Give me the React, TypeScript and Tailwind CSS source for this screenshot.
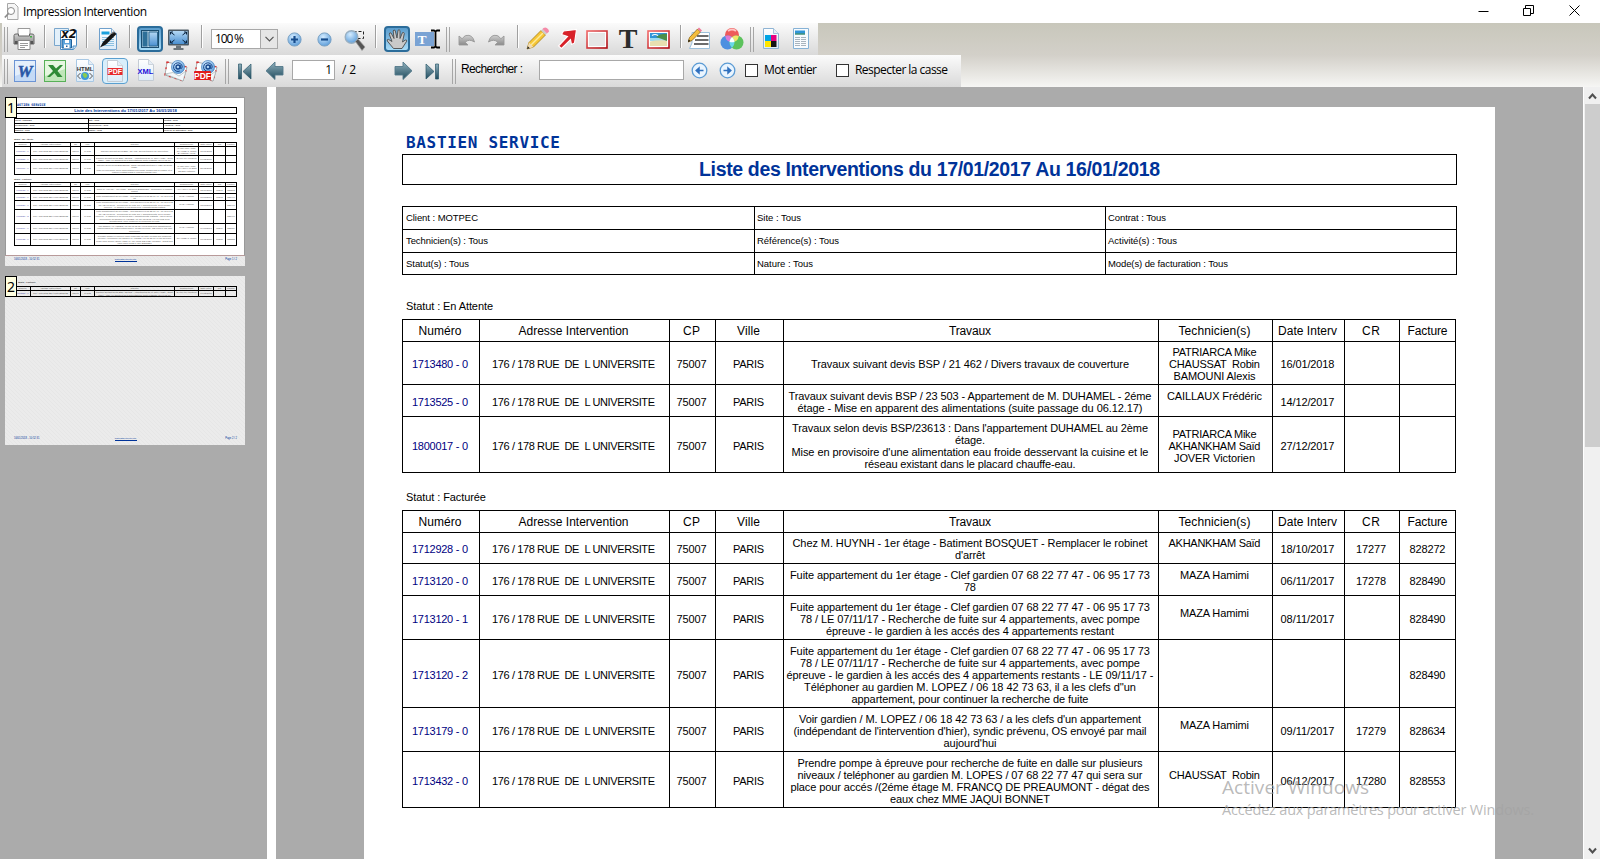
import React, { useLayoutEffect, useRef } from "react";

/* Text whose tracking is set so that it fills a given width. */
function Fit({ w, className = "", children }: { w: number; className?: string; children: string }) {
  const ref = useRef<HTMLSpanElement>(null);
  useLayoutEffect(() => {
    const el = ref.current;
    if (!el) return;
    el.style.letterSpacing = "0px";
    const natural = el.getBoundingClientRect().width;
    const gap = (w - natural) / Math.max(1, children.length - 1);
    el.style.letterSpacing = `${gap}px`;
    el.style.marginRight = `${-gap}px`;
  }, [w, children]);
  return (
    <span ref={ref} className={`inline-block whitespace-pre ${className}`}>
      {children}
    </span>
  );
}

type Line = [string, number];
type Row = { h: number; mini: number; num: string; works: Line[]; tech: Line[]; date: string; cr: string; bill: string };

const A: Line = ["Fuite appartement du 1er étage - Clef gardien 07 68 22 77 47 - 06 95 17 73", 360];
const B: Line = ["78 / LE 07/11/17 - Recherche de fuite sur 4 appartements, avec pompe", 340];
const BLANK: Line = ["", 0];
const MAZA: Line[] = [["MAZA Hamimi", 69], BLANK];

const waiting: Row[] = [
  { h: 43, mini: 9, num: "1713480 - 0", works: [["Travaux suivant devis BSP / 21 462 / Divers travaux de couverture", 318]], tech: [["PATRIARCA Mike", 84], ["CHAUSSAT  Robin", 91], ["BAMOUNI Alexis", 82]], date: "16/01/2018", cr: "", bill: "" },
  { h: 32, mini: 7, num: "1713525 - 0", works: [["Travaux suivant devis BSP / 23 503 - Appartement de M. DUHAMEL - 2éme", 363], ["étage - Mise en apparent des alimentations (suite passage du 06.12.17)", 345]], tech: [["CAILLAUX Frédéric", 95], BLANK], date: "14/12/2017", cr: "", bill: "" },
  { h: 56, mini: 12, num: "1800017 - 0", works: [["Travaux selon devis BSP/23613 : Dans l'appartement DUHAMEL au 2ème", 356], ["étage.", 30], ["Mise en provisoire d'une alimentation eau froide desservant la cuisine et le", 357], ["réseau existant dans le placard chauffe-eau.", 211]], tech: [["PATRIARCA Mike", 84], ["AKHANKHAM Saïd", 92], ["JOVER Victorien", 81]], date: "27/12/2017", cr: "", bill: "" },
];

const billed: Row[] = [
  { h: 31, mini: 7, num: "1712928 - 0", works: [["Chez M. HUYNH - 1er étage - Batiment BOSQUET - Remplacer le robinet", 355], ["d'arrêt", 30]], tech: [["AKHANKHAM Saïd", 92], BLANK], date: "18/10/2017", cr: "17277", bill: "828272" },
  { h: 32, mini: 7, num: "1713120 - 0", works: [A, ["78", 12]], tech: MAZA, date: "06/11/2017", cr: "17278", bill: "828490" },
  { h: 44, mini: 9, num: "1713120 - 1", works: [A, B, ["épreuve - le gardien à les accés des 4 appartements restant", 288]], tech: MAZA, date: "08/11/2017", cr: "", bill: "828490" },
  { h: 68, mini: 14, num: "1713120 - 2", works: [A, B, ["épreuve - le gardien à les accés des 4 appartements restants - LE 09/11/17 -", 367], ["Téléphoner au gardien M. LOPEZ / 06 18 42 73 63, il a les clefs d''un", 332], ["appartement, pour continuer la recherche de fuite", 237]], tech: [], date: "", cr: "", bill: "828490" },
  { h: 44, mini: 10, num: "1713179 - 0", works: [["Voir gardien / M. LOPEZ / 06 18 42 73 63 / a les clefs d'un appartement", 342], ["(indépendant de l'intervention d'hier), syndic prévenu, OS envoyé par mail", 353], ["aujourd'hui", 53]], tech: MAZA, date: "09/11/2017", cr: "17279", bill: "828634" },
  { h: 56, mini: 12, num: "1713432 - 0", works: [["Prendre pompe à épreuve pour recherche de fuite en dalle sur plusieurs", 345], ["niveaux / teléphoner au gardien M. LOPES / 07 68 22 77 47 qui sera sur", 345], ["place pour accés /(2éme étage M. FRANCQ DE PREAUMONT - dégat des", 359], ["eaux chez MME JAQUI BONNET", 160]], tech: [["CHAUSSAT  Robin", 91], BLANK], date: "06/12/2017", cr: "17280", bill: "828553" },
];

const heads: Line[] = [["Numéro", 43], ["Adresse Intervention", 110], ["CP", 17], ["Ville", 23], ["Travaux", 42], ["Technicien(s)", 72], ["Date Interv", 59], ["CR", 18], ["Facture", 40]];
const COLS = "grid grid-cols-[77px_190px_46px_68px_375px_114px_72px_55px_57px]";
const MINI = "grid grid-cols-[16px_40px_10px_14px_80px_24px_15px_12px_12px]";

function Cell({ lines, blue = false }: { lines: Line[]; blue?: boolean }) {
  return (
    <div className={`flex flex-col items-center justify-center border-l border-black pr-[2px] text-[11px] leading-[12px] last:border-r last:pr-0 ${blue ? "text-[#00007f]" : "text-black"}`}>
      {lines.map(([t, w], i) => (t ? <Fit key={i} w={w}>{t}</Fit> : <div key={i} className="h-[12px]" />))}
    </div>
  );
}

function Table({ rows }: { rows: Row[] }) {
  return (
    <div className="w-[1054px] border-b border-black">
      <div className={`${COLS} h-[22px] border-t border-black`}>
        {heads.map(([t, w]) => (
          <div key={t} className="flex items-center justify-center border-l border-black pt-px pr-[2px] text-[12px] leading-[14px] last:border-r last:pr-0">
            <Fit w={w}>{t}</Fit>
          </div>
        ))}
      </div>
      {rows.map((r) => (
        <div key={r.num} className={`${COLS} border-t border-black ${r.h % 2 ? "pt-[2px]" : "pt-[3px]"} *:relative *:before:absolute *:before:-top-[3px] *:before:-left-px *:before:h-[3px] *:before:w-px *:before:bg-black last:*:last:after:bg-black *:last:after:absolute *:last:after:-top-[3px] *:last:after:-right-px *:last:after:h-[3px] *:last:after:w-px *:last:after:bg-black`} style={{ height: r.h }}>
          <Cell blue lines={[[r.num, 56]]} />
          <Cell lines={[["176 / 178 RUE  DE  L UNIVERSITE", 163]]} />
          <Cell lines={[["75007", 30]]} />
          <Cell lines={[["PARIS", 31]]} />
          <Cell lines={r.works} />
          <Cell lines={r.tech} />
          <Cell lines={r.date ? [[r.date, 54]] : []} />
          <Cell lines={r.cr ? [[r.cr, 30]] : []} />
          <Cell lines={r.bill ? [[r.bill, 36]] : []} />
        </div>
      ))}
    </div>
  );
}

const info: Line[][] = [
  [["Client : MOTPEC", 72], ["Site : Tous", 44], ["Contrat : Tous", 58]],
  [["Technicien(s) : Tous", 82], ["Référence(s) : Tous", 82], ["Activité(s) : Tous", 69]],
  [["Statut(s) : Tous", 63], ["Nature : Tous", 56], ["Mode(s) de facturation : Tous", 120]],
];

function Report() {
  return (
    <div className="h-[752px] w-[1131px] shrink-0 bg-white pl-[38px] text-black">
      <div className="h-[47px] pt-[25px] pl-[4px] text-[16px] leading-[22px] font-bold text-[#003399] [font-family:'Comic_Sans_MS','DejaVu_Sans_Mono',monospace]">
        <Fit w={154}>BASTIEN SERVICE</Fit>
      </div>
      <div className="flex h-[31px] w-[1055px] items-center justify-center border border-black pb-[2px] text-[19.5px] leading-[22px] font-bold text-[#003399]">
        <Fit w={461}>Liste des Interventions du 17/01/2017 Au 16/01/2018</Fit>
      </div>
      <div className="mt-[21px] w-[1055px] border-b border-black">
        {info.map((row, i) => (
          <div key={i} className={`grid grid-cols-[352px_351px_352px] border-t border-black ${i === 2 ? "h-[22px]" : "h-[23px]"}`}>
            {row.map(([t, w]) => (
              <div key={t} className="flex items-center border-l border-black pl-[2px] text-[9.5px] leading-[12px] first:pl-[3px] last:border-r">
                <Fit w={w}>{t}</Fit>
              </div>
            ))}
          </div>
        ))}
      </div>
      <div className="h-[44px] pt-[25px] pl-[4px] text-[11px] leading-[13px]">
        <Fit w={87}>Statut : En Attente</Fit>
      </div>
      <Table rows={waiting} />
      <div className="h-[37px] pt-[18px] pl-[4px] text-[11px] leading-[13px]">
        <Fit w={80}>Statut : Facturée</Fit>
      </div>
      <Table rows={billed} />
    </div>
  );
}

function MiniCell({ lines, blue = false }: { lines: string[]; blue?: boolean }) {
  return (
    <div className={`flex min-w-0 flex-col items-center justify-center overflow-hidden border-l border-black text-[2.3px] leading-[2.5px] whitespace-pre last:border-r ${blue ? "text-[#5555aa]" : "text-[#555]"}`}>
      {lines.map((t, i) => (t ? <span key={i}>{t}</span> : <div key={i} className="h-[2.5px]" />))}
    </div>
  );
}

function MiniTable({ rows }: { rows: Row[] }) {
  return (
    <div className="w-[223px] border-b border-black">
      <div className={`${MINI} h-[4px] border-t border-black`}>
        {heads.map(([t]) => (
          <MiniCell key={t} lines={[t]} />
        ))}
      </div>
      {rows.map((r) => (
        <div key={r.num} className={`${MINI} border-t border-black`} style={{ height: r.mini }}>
          <MiniCell blue lines={[r.num]} />
          <MiniCell lines={["176 / 178 RUE DE L UNIVERSITE"]} />
          <MiniCell lines={["75007"]} />
          <MiniCell lines={["PARIS"]} />
          <MiniCell lines={r.works.map((l) => l[0])} />
          <MiniCell lines={r.tech.map((l) => l[0])} />
          <MiniCell lines={[r.date]} />
          <MiniCell lines={[r.cr]} />
          <MiniCell lines={[r.bill]} />
        </div>
      ))}
    </div>
  );
}

function MiniFooter({ page }: { page: string }) {
  return (
    <div className="flex h-[10px] justify-between pt-[2px] pr-[8px] pl-[9px] text-[2.6px] leading-[3px] text-[#003399]">
      <span className="w-[27px]">16/01/2018 - 10:52:31</span>
      <span className="h-[4px] w-[22px] border-b border-[#003399] text-center text-[1.9px] whitespace-nowrap">www.bastien-service.com</span>
      <span className="w-[27px] text-right">{page}</span>
    </div>
  );
}

const HATCH = "bg-[#e8e8e8] bg-[repeating-linear-gradient(45deg,#e6e6e6_0px,#e6e6e6_1px,#ebebeb_1px,#ebebeb_2.83px)]";

function Badge({ n }: { n: string }) {
  return (
    <div className="absolute top-0 left-0 flex h-[21px] w-[12px] items-center justify-center border border-black bg-[#ffffe1] text-[14px] leading-none text-black [font-family:'Noto_Sans',sans-serif]">{n}</div>
  );
}

function Thumbs() {
  return (
    <div className="w-[267px] shrink-0 pt-[10px] pl-[5px]">
      <div className="relative h-[169px] w-[240px]">
        <div className="h-[159px] border border-[#999] border-b-[#b89a9a] bg-white pl-[8px]">
          <div className="h-[9px] pt-[5px] pl-[1px] text-[3.4px] leading-[4px] font-bold text-[#003399] [font-family:'DejaVu_Sans_Mono',monospace]">BASTIEN SERVICE</div>
          <div className="flex h-[7px] w-[223px] items-center justify-center border border-black text-[4.2px] leading-[4px] font-bold text-[#003399]">Liste des Interventions du 17/01/2017 Au 16/01/2018</div>
          <div className="mt-[4px] h-[15px] w-[223px] border-b border-black">
            {info.map((row, i) => (
              <div key={i} className={`grid grid-cols-[74px_75px_74px] border-t border-black ${i === 2 ? "h-[4px]" : "h-[5px]"}`}>
                {row.map(([t]) => (
                  <div key={t} className="border-l border-black text-[2.2px] leading-[3px] whitespace-nowrap last:border-r">{t}</div>
                ))}
              </div>
            ))}
          </div>
          <div className="h-[9px] pt-[5px] text-[2.4px] leading-[3px]">Statut : En Attente</div>
          <MiniTable rows={waiting} />
          <div className="h-[7px] pt-[3px] text-[2.4px] leading-[3px]">Statut : Facturée</div>
          <MiniTable rows={billed} />
        </div>
        <div className={HATCH}>
          <MiniFooter page="Page 1 / 2" />
        </div>
        <Badge n="1" />
      </div>
      <div className={`relative mt-[10px] flex h-[169px] w-[240px] flex-col ${HATCH}`}>
        <div className="flex-1 pl-[9px]">
          <div className="h-[10px] pt-[5px] pl-[4px] text-[2.4px] leading-[3px]">Statut : Facturée</div>
          <MiniTable rows={[{ ...waiting[1], mini: 6, num: "1713525 - 1" }]} />
        </div>
        <MiniFooter page="Page 2 / 2" />
        <Badge n="2" />
      </div>
    </div>
  );
}

/* ---------- toolbar ---------- */

function Ico({ w = 24, h = 24, children }: { w?: number; h?: number; children: React.ReactNode }) {
  return (
    <svg width={w} height={h} viewBox={`0 0 ${w} ${h}`} className="block shrink-0">{children}</svg>
  );
}

function Defs() {
  return (
    <svg width="0" height="0" className="absolute">
      <defs>
        <linearGradient id="steel" x1="0" y1="0" x2="0" y2="1"><stop offset="0" stopColor="#8fb0bd" /><stop offset="1" stopColor="#1f4a5c" /></linearGradient>
        <linearGradient id="sky" x1="0" y1="0" x2="0" y2="1"><stop offset="0" stopColor="#b4d8f4" /><stop offset="1" stopColor="#4a8fd0" /></linearGradient>
        <linearGradient id="grey" x1="0" y1="0" x2="0" y2="1"><stop offset="0" stopColor="#d0d0d0" /><stop offset="1" stopColor="#8a8a8a" /></linearGradient>
        <linearGradient id="doc" x1="0" y1="0" x2="0" y2="1"><stop offset="0" stopColor="#ffffff" /><stop offset="1" stopColor="#dcebf8" /></linearGradient>
        <linearGradient id="red" x1="0" y1="0" x2="1" y2="1"><stop offset="0" stopColor="#f26a6a" /><stop offset="1" stopColor="#b00d14" /></linearGradient>
        <radialGradient id="ball" cx="0.4" cy="0.3" r="0.8"><stop offset="0" stopColor="#d4ecff" /><stop offset="1" stopColor="#4f94d6" /></radialGradient>
      </defs>
    </svg>
  );
}

function Slot({ className, children }: { className: string; children?: React.ReactNode }) {
  return <div className={`flex h-full shrink-0 items-center ${className}`}>{children}</div>;
}

function Sep() {
  return <div className="mb-[5px] h-[23px] w-[2px] border-l border-[#a0a0a0] bg-white" />;
}

function Grip() {
  return (
    <div className="flex gap-[2px]">
      <div className="h-[25px] w-px bg-[#a6a6a6]" />
      <div className="h-[25px] w-px bg-[#a6a6a6]" />
    </div>
  );
}

function PageShape({ x = 0, y = 0, w = 18, h = 22, stroke = "#6fa0cc" }: { x?: number; y?: number; w?: number; h?: number; stroke?: string }) {
  return (
    <g>
      <path d={`M${x + 0.5} ${y + 0.5}H${x + w - 5.5}L${x + w - 0.5} ${y + 5.5}V${y + h - 0.5}H${x + 0.5}Z`} fill="url(#doc)" stroke={stroke} />
      <path d={`M${x + w - 5.5} ${y + 0.5}V${y + 5.5}H${x + w - 0.5}`} fill="#e6eef6" stroke={stroke} strokeWidth=".8" />
    </g>
  );
}

function Mail({ pdf = false }: { pdf?: boolean }) {
  return (
    <Ico w={24} h={24}>
      <path d="M3 3 L23 8 L19 22 L1 16Z" fill="#fff" stroke="#999" strokeWidth=".8" />
      <path d="M3 3 L23 8 L19 22 L1 16Z" fill="none" stroke="#d33" strokeWidth="1.3" strokeDasharray="2 4" />
      <circle cx="14" cy="8" r="6.6" fill="url(#ball)" stroke="#3c78b8" strokeWidth=".6" />
      <circle cx="14" cy="8" r="2" fill="none" stroke="#14448a" strokeWidth="1.3" />
      <path d="M16.2 6v3.2q1.6 1 2-1.2a4.3 4.3 0 1 0-2.4 4" fill="none" stroke="#14448a" strokeWidth="1" />
      <path d="M1 15 9 13.5 15 17 22 12 19 22Z" fill="#f4f7fa" stroke="#9aa" strokeWidth=".6" />
      {pdf && (
        <>
          <rect x="0" y="12" width="17" height="9" rx="1" fill="#e01b1b" />
          <text x="8.5" y="19.5" textAnchor="middle" fontSize="8.5" fontWeight="bold" fill="#fff" fontFamily="Liberation Sans">PDF</text>
        </>
      )}
    </Ico>
  );
}

function ToolbarTop() {
  return (
    <div className="flex h-[32px] w-[816px] items-center bg-linear-to-b from-[#fbfbfb] to-[#d9d9d9]">
      <Slot className="w-[11px] pl-[2px]"><Grip /></Slot>
      <Slot className="w-[31px]">
        <Ico w={22} h={24}>
          <path d="M5 1.5h12v8H5z" fill="#fff" stroke="#999" />
          <path d="M1 8.5Q1 7 3 7H5.5v2h11V7H19q2 0 2 1.5V17H1Z" fill="url(#grey)" stroke="#666" />
          <path d="M2 14h18v3H2z" fill="#555" />
          <path d="M5 13.5h12v9H5z" fill="#fff" stroke="#888" />
          <path d="M7 16.5h8M7 18.5h8M7 20.5h5" stroke="#999" />
          <rect x="17" y="9" width="2" height="1.5" fill="#4a4" />
        </Ico>
      </Slot>
      <Slot className="w-[10px]"><Sep /></Slot>
      <Slot className="w-[32px]">
        <Ico w={24} h={24}>
          <path d="M.5 1.5h14v17H.5z" fill="#e3f0fa" stroke="#7aa6cc" />
          <path d="M9.5 3.5h13v15l-3 4h-13v-19Z" fill="#fff" stroke="#4a8cc4" />
          <path d="M8 12.500h9.500v8.500H8z" fill="#5ba3da" stroke="#1f6099" />
          <path d="M11 13h4v3h-4zM10 17.500h5.500V21H10z" fill="#fff" />
          <path d="M12 18.500h1.500v1.500H12z" fill="#1f6099" />
          <path d="M19 22.500V19h3.500" fill="#cfe4f5" stroke="#4a8cc4" />
          <text x="15" y="11" textAnchor="middle" fontSize="11.500" fontWeight="bold" fontStyle="italic" fill="#111" fontFamily="DejaVu Sans">x2</text>
        </Ico>
      </Slot>
      <Slot className="w-[12px]"><Sep /></Slot>
      <Slot className="w-[31px]">
        <Ico w={20} h={24}>
          <PageShape x={1} y={1} w={18} h={22} />
          <path d="M3.500 4.500h8v3h-8z" fill="#1aa0dc" />
          <path d="M4 10.500h12M4 12.500h12M4 14.500h12M4 16.500h12M4 18.500h12" stroke="#8cc0e0" />
          <path d="M2 20.500 5 15 15.500 4.500l3 2.500L8 17.500Z" fill="#161616" />
          <path d="m12 7 4-1.500" stroke="#999" strokeWidth=".8" />
        </Ico>
      </Slot>
      <Slot className="w-[8px]"><Sep /></Slot>
      <Slot className="w-[30px]">
        <div className="flex h-[26px] w-[26px] items-center justify-center rounded-[4px] border-2 border-[#2b6c9a] bg-linear-to-b from-[#5a9ccc] to-[#a8dcf8]">
          <Ico w={18} h={18}>
            <rect x=".5" y=".5" width="17" height="17" fill="#b5cfe0" stroke="#1a4d70" />
            <path d="M1.500 1.500h5v15h-5z" fill="#2d6f98" />
            <path d="M8 2h8.500v14H8z" fill="url(#sky)" stroke="#2c6890" />
          </Ico>
        </div>
      </Slot>
      <Slot className="w-[34px]">
        <Ico w={24} h={24}>
          <rect x="1" y="2.500" width="21" height="16" rx="1" fill="#4c5a64" />
          <rect x="2.500" y="4" width="18" height="13" fill="url(#sky)" />
          <path d="M3.500 7.500V5H6M17 5h2.500v2.500M3.500 13.500V16H6M17 16h2.500v-2.500M4 5.500l3.500 2.500M19 5.500l-3.500 2.500M4 15.500l3.500-2.500M19 15.500l-3.500-2.500" fill="none" stroke="#0b2540" strokeWidth="1" />
          <path d="M9 18.500h5v2.500H9zM6.500 21h10v2h-10z" fill="#6c757b" />
        </Ico>
      </Slot>
      <Slot className="w-[10px]"><Sep /></Slot>
      <Slot className="w-[76px]">
        <div className="flex h-[20px] w-[67px] border border-[#a8a8a8] bg-white text-[12px] leading-[17px] text-black [font-family:'Open_Sans',sans-serif]">
          <div className="w-[48px] pl-[3px]"><Fit w={29}>100 %</Fit></div>
          <div className="flex flex-1 items-center justify-center border-l border-[#a8a8a8] bg-[#e6e6e6]">
            <Ico w={9} h={6}><path d="m.5.8 4 4 4-4" fill="none" stroke="#555" strokeWidth="1.200" /></Ico>
          </div>
        </div>
      </Slot>
      <Slot className="w-[30px]">
        <Ico w={15} h={17}>
          <circle cx="7.500" cy="8.500" r="6.600" fill="url(#ball)" stroke="#7aa2c4" />
          <path d="M4 8.500h7M7.500 5v7" stroke="#174c8c" strokeWidth="2.200" />
        </Ico>
      </Slot>
      <Slot className="w-[27px]">
        <Ico w={15} h={17}>
          <circle cx="7.500" cy="8.500" r="6.600" fill="url(#ball)" stroke="#7aa2c4" />
          <path d="M4 8.500h7" stroke="#174c8c" strokeWidth="2.200" />
        </Ico>
      </Slot>
      <Slot className="w-[31px] pt-px">
        <Ico w={22} h={24}>
          <path d="M9.500 3.500h10v7h-10z" fill="none" stroke="#222" strokeDasharray="3 2" />
          <circle cx="7.500" cy="9" r="6.300" fill="url(#ball)" stroke="#9ab0c2" strokeWidth="1.400" />
          <path d="m11.500 13.500 2.500-2.500 7 8-3 3.500Z" fill="#555" stroke="#999" strokeWidth=".7" />
        </Ico>
      </Slot>
      <Slot className="w-[9px]"><Sep /></Slot>
      <Slot className="w-[31px]">
        <div className="flex h-[26px] w-[26px] items-center justify-center rounded-[4px] border-2 border-[#2b6c9a] bg-linear-to-b from-[#5a9ccc] to-[#a8dcf8]">
          <Ico w={22} h={22}>
            <path d="M7.500 20.500 1.300 13q-.6-1.800 1.200-1.600L6 13.500 3.300 6.300Q3.300 4.300 5 4.900L8 10.500 7.200 3Q7.700 1.200 9.200 2.500L11 10 12 2.300Q13.200 1 14 2.600L14 10.500 16.500 4.600Q18 4 18.300 5.600L16.500 14 19.300 12q1.700-.3 1.400 1.200L16 20.500Z" fill="#c9c9c9" stroke="#4c4c4c" strokeWidth=".9" />
          </Ico>
        </div>
      </Slot>
      <Slot className="w-[31px]">
        <Ico w={25} h={24}>
          <path d="M0 5h19v14H0z" fill="#7aa3d4" />
          <text x="7" y="16.500" textAnchor="middle" fontSize="13.500" fontWeight="bold" fill="#fff" fontFamily="Liberation Serif">T</text>
          <path d="M16 3.500h3l1.500 1 1.500-1h3M16 20.500h3l1.500-1 1.500 1h3M20.500 4v16" fill="none" stroke="#000" strokeWidth="1.800" />
        </Ico>
      </Slot>
      <Slot className="w-[12px]"><Grip /></Slot>
      <Slot className="w-[29px] pt-px">
        <Ico w={18} h={14}><path d="M1 3v9h9L7.200 9.200Q11 5.500 16.500 9 14.500 1 8 2.500 6 3 4.200 5.800Z" fill="url(#grey)" stroke="#999" strokeWidth=".9" /></Ico>
      </Slot>
      <Slot className="w-[30px] pt-px">
        <Ico w={18} h={14}><path d="M17 3v9H8l2.800-2.800Q7 5.500 1.500 9 3.500 1 10 2.500q2 .5 3.800 3.300Z" fill="url(#grey)" stroke="#999" strokeWidth=".9" /></Ico>
      </Slot>
      <Slot className="w-[9px]"><Sep /></Slot>
      <Slot className="w-[31px]">
        <Ico w={23} h={24}>
          <path d="m1 22 2-6.500L15 3.500l4.500 4.500L7.500 20Z" fill="#f6c636" stroke="#a67c12" strokeWidth=".8" />
          <path d="M5 18 17 6" stroke="#fdeb9a" strokeWidth="1.500" />
          <path d="m1 22 2-6.500 4.500 4.500Z" fill="#f2dcb4" /><path d="m1 22 .8-2.700 2 2Z" fill="#222" />
          <path d="m15 3.500 1.500-1.500 4.500 4.500L19.500 8Z" fill="#ccc" /><path d="m16.500 2 1-1Q20-.500 22 2t0 3.500l-1 1Z" fill="#f58aa8" />
        </Ico>
      </Slot>
      <Slot className="w-[29px]">
        <Ico w={22} h={24}><path d="M1.500 19 10.500 9.500 4.500 7.500 6.500 4 19.500 2.500 17.500 16 14.500 17.500 13.500 12.500 4.500 21.500Z" fill="#d8222a" stroke="#fff" strokeWidth="1.100" /></Ico>
      </Slot>
      <Slot className="w-[32px]">
        <Ico w={23} h={21}><rect x="1" y="2" width="20" height="17" fill="#e6e6e6" stroke="url(#red)" strokeWidth="1.600" /><rect x="2.500" y="3.500" width="17" height="14" fill="none" stroke="#fff" /></Ico>
      </Slot>
      <Slot className="w-[29px]">
        <span className="inline-block w-[20px] text-center text-[28px] leading-[28px] font-bold text-[#2c2c2c] [font-family:'Liberation_Serif',serif]">T</span>
      </Slot>
      <Slot className="w-[33px]">
        <Ico w={24} h={21}>
          <rect x="1" y="2" width="21" height="17" fill="#fff" stroke="url(#red)" strokeWidth="1.600" />
          <path d="M3 4h17v5H3z" fill="#2f95d8" /><path d="M3 9h17v3H3z" fill="#9fdcf0" />
          <path d="M3 12.500q8-2 17-1V17H3Z" fill="#e8dfb0" /><path d="M9 8q5-4 11-3v7q-5-2-11-4Z" fill="#4b8f4a" />
          <path d="M5 6.500q3-2 6 0" stroke="#fff" strokeWidth="1.200" fill="none" />
        </Ico>
      </Slot>
      <Slot className="w-[8px]"><Sep /></Slot>
      <Slot className="w-[32px]">
        <Ico w={23} h={24}>
          <path d="M4 5.500h17.500v16H1.500L4 16Z" fill="#fff" stroke="#9cc0dc" />
          <path d="M9 9h11.500M7 13h13.500M6 17h14.500" stroke="#3d3d3d" strokeWidth="1.700" />
          <path d="m0 15 1.500-4.500L9.500 2l3 3L4 13.500Z" fill="#f4bd3c" stroke="#805a10" strokeWidth=".7" /><path d="m0 15 .8-2.500 1.600 1.500Z" fill="#111" /><path d="m9.500 2 1.500-1.500 3 3L12.500 5Z" fill="#ee7d9c" />
        </Ico>
      </Slot>
      <Slot className="w-[30px]">
        <Ico w={24} h={24}>
          <circle cx="12" cy="8" r="7" fill="#ee5a5a" /><circle cx="7.500" cy="15.500" r="7" fill="#4d90e0" /><circle cx="16.500" cy="15.500" r="7" fill="#5cc25c" />
          <path d="M5.200 9a7 7 0 0 1 8.300 3q-1 2-1.500 3-6 0-6.800-6Z" fill="#dd7ad6" /><path d="M18.800 9a7 7 0 0 0-8.300 3q1 2 1.500 3 6 0 6.800-6Z" fill="#f0e468" /><path d="M12 10.200a7 7 0 0 1 0 10.700 7 7 0 0 1 0-10.700Z" fill="#68d8e8" /><path d="M12 10.200q2.500 2 2.500 4.500-2.500 1-5 0 0-2.500 2.500-4.500Z" fill="#fff" />
          <path d="M8 4q4-3 8 0" stroke="#ffc4c4" strokeWidth="2" fill="none" />
        </Ico>
      </Slot>
      <Slot className="w-[13px]"><Grip /></Slot>
      <Slot className="w-[29px]">
        <Ico w={17} h={22}>
          <PageShape w={16} h={21} stroke="#8fb4d4" />
          <path d="M2 7h6v6H2z" fill="#00a4e4" /><path d="M8 7h5.500v6H8z" fill="#e6007e" /><path d="M2 13h6v6H2z" fill="#ffe600" /><path d="M8 13h5.500v6H8z" fill="#151515" />
        </Ico>
      </Slot>
      <Slot className="w-[20px]">
        <Ico w={19} h={22}>
          <path d="M1.500.500h15v20h-15z" fill="#f8fbfe" stroke="#86b2d6" />
          <path d="M3 2.500h10v4H3z" fill="#2f95d8" /><path d="M3 5.500h10v1H3z" fill="#4b8f4a" />
          <path d="M3 9.500h12M3 11.500h12M3 13.500h12M3 15.500h12M3 17.500h12" stroke="#a8b4be" strokeDasharray="5 1" />
        </Ico>
      </Slot>
    </div>
  );
}

function Field({ className, children }: { className: string; children?: React.ReactNode }) {
  return <div className={`h-[20px] border border-[#a8a8a8] bg-white text-[12px] leading-[18px] text-black ${className}`}>{children}</div>;
}

function ToolbarBottom() {
  return (
    <div className="flex h-[32px] w-[959px] items-center bg-linear-to-b from-[#fbfbfb] to-[#d9d9d9]">
      <Slot className="w-[12px] pl-[2px]"><Grip /></Slot>
      <Slot className="w-[30px]">
        <Ico w={22} h={23}>
          <rect x=".5" y=".5" width="21" height="21" fill="#c4daf6" stroke="#6c94d4" /><path d="m1 1 20 0v8L1 16Z" fill="#e4effc" />
          <text x="11" y="17" textAnchor="middle" fontSize="17" fontWeight="bold" fontStyle="italic" fill="#2a57a6" stroke="#2a57a6" strokeWidth=".5" fontFamily="Liberation Serif">W</text>
        </Ico>
      </Slot>
      <Slot className="w-[32px]">
        <Ico w={22} h={23}>
          <rect x=".5" y=".5" width="21" height="21" fill="#bfe6b8" stroke="#58b058" /><path d="m1 1 20 0v8L1 16Z" fill="#e6f7e0" />
          <path d="M4 5h5l3 3.500L16 5h3l-5.500 6 5 6h-5L10.500 13 6 17H3l6-6Z" fill="#2d8a34" />
        </Ico>
      </Slot>
      <Slot className="w-[26px]">
        <Ico w={18} h={24}>
          <PageShape w={18} h={23} stroke="#a8c8e4" />
          <text x="9" y="12" textAnchor="middle" fontSize="6" fontWeight="bold" fill="#333" fontFamily="Liberation Sans">HTML</text>
          <circle cx="9" cy="17" r="4" fill="#3c9ad8" /><path d="M6.500 15q2-2 4 0t-1 4q-2 0-3-4Z" fill="#8ccc50" />
          <path d="m4.500 14-3 3 3 3M13.500 14l3 3-3 3" fill="none" stroke="#555" />
        </Ico>
      </Slot>
      <Slot className="w-[35px]">
        <div className="flex h-[26px] w-[26px] items-center justify-center rounded-[4px] border border-[#5a9fcf] bg-[#d9effb]">
          <Ico w={18} h={23}>
            <PageShape x={1} w={16} h={22} stroke="#c4ccd4" />
            <rect x="1.500" y="8" width="15" height="7" fill="#e8292c" />
            <text x="9" y="14" textAnchor="middle" fontSize="7" fontWeight="bold" fill="#fff" fontFamily="Liberation Sans">PDF</text>
          </Ico>
        </div>
      </Slot>
      <Slot className="w-[27px]">
        <Ico w={18} h={24}>
          <PageShape x={1} w={16} h={22} stroke="#c4ccd4" />
          <text x="8.500" y="14.500" textAnchor="middle" fontSize="7.500" fontWeight="bold" fill="#1a10d8" fontFamily="Liberation Sans">XML</text>
        </Ico>
      </Slot>
      <Slot className="w-[30px]"><Mail /></Slot>
      <Slot className="w-[31px]"><Mail pdf /></Slot>
      <Slot className="w-[13px]"><Grip /></Slot>
      <Slot className="w-[27px]">
        <Ico w={14} h={17}><path d="M.500 1h3v15h-3zM13 1v15L5 8.500Z" fill="url(#steel)" stroke="#2a5668" strokeWidth=".7" /></Ico>
      </Slot>
      <Slot className="w-[27px]">
        <Ico w={19} h={20}><path d="M10 1v4.500h8v8.500h-8v4.500L1 9.800Z" fill="url(#steel)" stroke="#54798a" strokeWidth=".9" /></Ico>
      </Slot>
      <Slot className="w-[50px] pb-[2px]">
        <Field className="w-[43px] pr-[2px] text-right [font-family:'Open_Sans',sans-serif]">1</Field>
      </Slot>
      <Slot className="w-[52px] pb-[2px] text-[12px] text-black [font-family:'Open_Sans',sans-serif]"><Fit w={14}>/ 2</Fit></Slot>
      <Slot className="w-[31px]">
        <Ico w={19} h={20}><path d="M9 1v4.500H1v8.500h8v4.500l9-8.700Z" fill="url(#steel)" stroke="#54798a" strokeWidth=".9" /></Ico>
      </Slot>
      <Slot className="w-[27px]">
        <Ico w={14} h={17}><path d="M1 1v15l8-7.500ZM10.500 1h3v15h-3z" fill="url(#steel)" stroke="#2a5668" strokeWidth=".7" /></Ico>
      </Slot>
      <Slot className="w-[9px]"><Grip /></Slot>
      <Slot className="w-[78px] pb-[4px] text-[12px] text-black"><Fit w={62}>Rechercher :</Fit></Slot>
      <Slot className="w-[152px] pb-[2px]"><Field className="w-[145px]" /></Slot>
      <Slot className="w-[28px] pb-px">
        <Ico w={17} h={17}><circle cx="8.500" cy="8.500" r="7.300" fill="#eaf5ff" stroke="#5b9bd4" strokeWidth="1.300" /><path d="M12.500 8.500H7M8 6 5.200 8.500 8 11Z" fill="#2f70be" stroke="#2f70be" strokeWidth="1.500" /></Ico>
      </Slot>
      <Slot className="w-[26px] pb-px">
        <Ico w={17} h={17}><circle cx="8.500" cy="8.500" r="7.300" fill="#eaf5ff" stroke="#5b9bd4" strokeWidth="1.300" /><path d="M4.500 8.500H10M9 6l2.800 2.500L9 11Z" fill="#2f70be" stroke="#2f70be" strokeWidth="1.500" /></Ico>
      </Slot>
      <Slot className="w-[91px] gap-[6px] pb-[2px] text-[12px] text-black [font-family:'Open_Sans',sans-serif]">
        <div className="h-[13px] w-[13px] border border-[#333] bg-white" />
        <Fit w={53}>Mot entier</Fit>
      </Slot>
      <Slot className="w-[114px] gap-[6px] pb-[2px] text-[12px] text-black [font-family:'Open_Sans',sans-serif]">
        <div className="h-[13px] w-[13px] border border-[#333] bg-white" />
        <Fit w={93}>Respecter la casse</Fit>
      </Slot>
    </div>
  );
}

export default function App() {
  return (
    <div className="relative flex h-[859px] w-[1600px] flex-col overflow-hidden bg-white [font-family:'Liberation_Sans',Arial,sans-serif]">
      <Defs />
      <div className="flex h-[23px] shrink-0 items-center bg-white pl-[4px] text-[12px] text-black [font-family:'Open_Sans',sans-serif]">
        <Ico w={15} h={17}>
          <path d="M3.500.500h7l3.500 3.500v12.500H3.500Z" fill="#f6f6f6" stroke="#a8a8a8" />
          <circle cx="7" cy="8" r="3.500" fill="#fff" stroke="#8a8a8a" /><path d="M4.500 10.500.800 14.500" stroke="#8a8a8a" strokeWidth="1.700" />
        </Ico>
        <div className="ml-[4px] flex-1"><Fit w={124}>Impression Intervention</Fit></div>
        <div className="flex items-center pr-[20px] pb-[3px]">
          <Ico w={11} h={11}><path d="M.500 6.500h10" stroke="#000" /></Ico>
          <div className="w-[34px]" />
          <Ico w={11} h={11}><path d="M.500 3.500h7v7h-7zM2.500 3V.500h8v8H8" fill="none" stroke="#000" /></Ico>
          <div className="w-[35px]" />
          <Ico w={11} h={11}><path d="m.5.500 10 10M10.500.500l-10 10" stroke="#000" /></Ico>
        </div>
      </div>
      <div className="h-[64px] shrink-0 bg-linear-to-b from-[#c8c7bb] via-[#d3d0c9] via-50% to-[#f6f6f4] pl-[2px]">
        <ToolbarTop />
        <ToolbarBottom />
      </div>
      <div className="flex flex-1 bg-[#ababab]">
        <Thumbs />
        <div className="w-[9px] shrink-0 bg-white" />
        <div className="flex flex-1 pt-[20px] pl-[88px]">
          <Report />
        </div>
        <div className="flex w-[17px] shrink-0 flex-col items-center border-l border-white bg-[#f0f0f0]">
          <div className="flex h-[17px] items-center"><Ico w={9} h={8}><path d="m1 6.500 3.500-4L8 6.500" fill="none" stroke="#505050" strokeWidth="2" /></Ico></div>
          <div className="h-[343px] w-[15px] bg-[#cdcdcd]" />
          <div className="flex-1" />
          <div className="flex h-[17px] items-center"><Ico w={9} h={8}><path d="m1 1.500 3.500 4L8 1.500" fill="none" stroke="#505050" strokeWidth="2" /></Ico></div>
        </div>
      </div>
      <div className="absolute top-[774px] left-[1222px] flex flex-col items-start text-[rgba(163,163,163,0.75)] [font-family:'Open_Sans',sans-serif]">
        <Fit w={147} className="text-[19px] leading-[26px]">Activer Windows</Fit>
        <Fit w={312} className="text-[14.5px] leading-[20px]">Accédez aux paramètres pour activer Windows.</Fit>
      </div>
    </div>
  );
}
